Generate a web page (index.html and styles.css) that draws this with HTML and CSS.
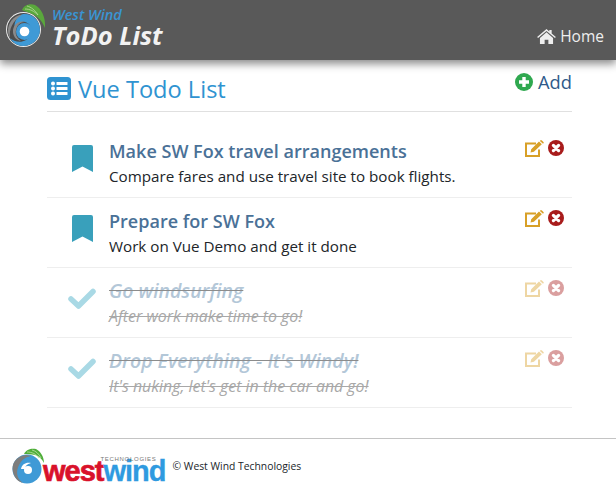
FILE: index.html
```html
<!DOCTYPE html>
<html lang="en">
<head>
<meta charset="utf-8">
<title>Vue Todo List</title>
<link rel="stylesheet" href="styles.css">
</head>
<body>
<svg class="defs" width="0" height="0" aria-hidden="true">
  <symbol id="edit" viewBox="0 0 19 17">
    <path fill="none" stroke="currentColor" stroke-width="2" d="M11 3.500H1V16H14V9.500"/>
    <path fill="currentColor" d="M5.500 12.500l.7-3.300L14 1.500l2.800 2.700-7.900 7.600zM14.900 .9l.9-.8q.7 0 1.700 1t1.400 1.700l-.9 .9z"/>
  </symbol>
  <symbol id="del" viewBox="0 0 16 16">
    <circle cx="8" cy="8" r="8" fill="currentColor"/>
    <path stroke="#fff" stroke-width="3.200" stroke-linecap="round" d="M5.400 5.400l5.200 5.200M10.600 5.400l-5.200 5.200"/>
  </symbol>
  <symbol id="mark" viewBox="0 0 21 27">
    <path fill="currentColor" d="M2 0H19Q21 0 21 2V27L10.500 21.500 0 27V2Q0 0 2 0Z"/>
  </symbol>
  <symbol id="check" viewBox="0 0 28 21">
    <path fill="none" stroke="currentColor" stroke-width="5.500" stroke-linejoin="round" stroke-linecap="round" d="M3 11L10.500 18 25 3.500"/>
  </symbol>
</svg>

<header class="topbar">
  <div class="brand">
    <svg class="brand-logo" viewBox="0 0 48 50" width="48" height="50" aria-hidden="true">
      <circle cx="23.500" cy="29.500" r="17.500" fill="#ececec"/>
      <circle cx="23.500" cy="29.500" r="16.500" fill="#4b4b4b"/>
      <path fill="#3f9ad6" d="M23 14C33 13 40 21 40 30 40 39 32 46 23 46 17 46 12 42 10 38 14 42 21 43 26 40 34 36 33 24 25 22 19 21 15 25 15 29 13 23 17 16 23 14Z"/>
      <path fill="#8a8a8a" d="M22 14.500C13 16 8 23 8 31c0 3 1 5 2 7-1-9 2-16 12-23.500zM13 30c-.5 6 3 10 8 11-4-3-6-6-5-11 1-5 4-8 9-8-6-2-11 2-12 8z"/>
      <circle cx="24.500" cy="31.500" r="8.500" fill="#3f9ad6"/>
      <circle cx="24.500" cy="31.500" r="4.800" fill="#fff"/>
      <path fill="#5aa83c" d="M22 10C24 5 30 3 35 5 41 8 46 17 45 28 42 20 36 15 30 13 27 12 24 11 22 10Z"/>
      <path fill="none" stroke="#b6d99c" stroke-width=".8" d="M27 6c4 1 8 4 11 9M25 9c5 0 9 2 13 6"/>
    </svg>
    <div class="brand-text">
      <div class="brand-sub">West Wind</div>
      <div class="brand-name">ToDo List</div>
    </div>
  </div>
  <a class="home" href="#">
    <svg viewBox="0 0 20 16" width="19" height="15" aria-hidden="true"><path fill="currentColor" d="M10 0l3 2.600V1h2.500v3.700L20 8.600l-1 1.100L10 2 1 9.700 0 8.600zM10 3.500l7 6V16h-5v-4.500H8V16H3V9.500z"/></svg>
    Home
  </a>
</header>

<main class="page">
  <div class="title-row">
    <h1 class="title">
      <svg viewBox="0 0 24 23" width="24" height="23" aria-hidden="true"><rect width="24" height="23" rx="3.500" fill="#2f93d1"/><g fill="#fff"><circle cx="6" cy="6.500" r="2"/><circle cx="6" cy="11.500" r="2"/><circle cx="6" cy="16.500" r="2"/><rect x="9.500" y="5" width="11" height="3" rx=".5"/><rect x="9.500" y="10" width="11" height="3" rx=".5"/><rect x="9.500" y="15" width="11" height="3" rx=".5"/></g></svg>
      <span class="title-text">Vue Todo List</span>
    </h1>
    <a class="add" href="#">
      <svg viewBox="0 0 18 18" width="18" height="18" aria-hidden="true"><circle cx="9" cy="9" r="9" fill="#2fa84f"/><path stroke="#fff" stroke-width="3.400" d="M9 4v10M4 9h10"/></svg>
      Add
    </a>
  </div>

  <ul class="todos">
    <li class="todo">
      <svg class="state state-open"><use href="#mark"/></svg>
      <div class="body">
        <div class="todo-title">Make SW Fox travel arrangements</div>
        <div class="todo-desc">Compare fares and use travel site to book flights.</div>
      </div>
      <div class="actions"><svg class="edit"><use href="#edit"/></svg><svg class="del"><use href="#del"/></svg></div>
    </li>
    <li class="todo">
      <svg class="state state-open"><use href="#mark"/></svg>
      <div class="body">
        <div class="todo-title">Prepare for SW Fox</div>
        <div class="todo-desc">Work on Vue Demo and get it done</div>
      </div>
      <div class="actions"><svg class="edit"><use href="#edit"/></svg><svg class="del"><use href="#del"/></svg></div>
    </li>
    <li class="todo done">
      <svg class="state state-done"><use href="#check"/></svg>
      <div class="body">
        <div class="todo-title">Go windsurfing</div>
        <div class="todo-desc">After work make time to go!</div>
      </div>
      <div class="actions"><svg class="edit"><use href="#edit"/></svg><svg class="del"><use href="#del"/></svg></div>
    </li>
    <li class="todo done">
      <svg class="state state-done"><use href="#check"/></svg>
      <div class="body">
        <div class="todo-title">Drop Everything - It's Windy!</div>
        <div class="todo-desc">It's nuking, let's get in the car and go!</div>
      </div>
      <div class="actions"><svg class="edit"><use href="#edit"/></svg><svg class="del"><use href="#del"/></svg></div>
    </li>
  </ul>
</main>

<footer class="footer">
  <div class="ww-logo">
    <svg viewBox="0 0 34 36" width="34" height="36" aria-hidden="true">
      <circle cx="16" cy="21" r="14.500" fill="#3f9ad6"/>
      <path fill="#7d7d7d" d="M15 7C5 8 0 16 2 24s7 10 10 11C5 30 5 23 8 17s7-8 12-9z"/>
      <path fill="#fff" d="M10 21c1-5 5-7 10-6-4 1-6 3-6 6z"/>
      <circle cx="17" cy="22" r="4" fill="#fff"/>
      <path fill="#4fae3a" d="M13 6C15 1 21 0 25 1c4 2 8 7 8 14-2-4-5-7-9-8-4-1-7-1-11-1Z"/>
      <path fill="none" stroke="#bfe0a8" stroke-width=".8" d="M16 4c5 0 9 2 12 6M21 2c4 1 7 4 9 8"/>
    </svg>
    <div class="ww-word">
      <span class="ww-tech">TECHNOLOGIES</span>
      <span class="ww-west">west</span><span class="ww-wind">wind</span>
    </div>
  </div>
  <span class="copy">© West Wind Technologies</span>
</footer>
</body>
</html>
```
FILE: styles.css
```css
* { box-sizing: border-box; }
html, body { margin: 0; padding: 0; }
body {
  font-family: "Open Sans", "Noto Sans", sans-serif;
  color: #212529;
  background: #fff;
  height: 493px;
  overflow: hidden;
}
a { text-decoration: none; }
.defs { position: absolute; }

.topbar {
  height: 60px;
  background: #595959;
  box-shadow: 0 4px 8px rgba(0, 0, 0, .45);
  display: flex;
  justify-content: space-between;
  padding: 0 12px 0 0;
}
.brand { display: flex; gap: 4px; }
.brand-logo { flex: none; }
.brand-text { display: flex; flex-direction: column; font-style: italic; }
.brand-sub { font-size: 14.5px; line-height: 14px; margin-top: 8px; color: #3a94d2; font-weight: 600; }
.brand-name { font-size: 25.5px; line-height: 27px; font-weight: 700; color: #f2f2f2; }
.home {
  align-self: flex-end;
  margin-bottom: 15px;
  color: #eee;
  font-size: 15.5px;
  line-height: 18px;
  display: flex;
  align-items: center;
  gap: 4px;
}

.page { width: 525px; margin: 0 0 0 47px; }
.title-row {
  height: 52px;
  border-bottom: 1px solid #e0e0e0;
  display: flex;
  justify-content: space-between;
  align-items: flex-start;
  padding-top: 11px;
}
.title {
  margin: 0;
  display: flex;
  align-items: center;
  gap: 7px;
  font-size: 23.6px;
  font-weight: 400;
  line-height: 34px;
  color: #2f93d1;
}
.title-text { position: relative; top: 1px; }
.add {
  display: flex;
  align-items: center;
  gap: 5px;
  color: #2f5a8a;
  font-size: 18.3px;
  line-height: 22px;
}

.todos { list-style: none; margin: 16px 0 0; padding: 0; }
.todo {
  height: 70px;
  border-bottom: 1px solid #eee;
  display: flex;
  padding-top: 11px;
}
.state { flex: none; }
.state-open { width: 21px; height: 27px; margin: 6px 16px 0 25px; color: #39a0bb; }
.state-done { width: 28px; height: 21px; margin: 9px 13px 0 21px; color: #a9d9e5; }
.body { flex: 1; min-width: 0; }
.todo-title { font-size: 18.05px; line-height: 25px; font-weight: 600; color: #4a7197; }
.todo-desc { font-size: 15.2px; line-height: 21px; margin-top: 2px; color: #212529; }
.actions { display: flex; align-items: center; gap: 4px; height: 18px; margin: 0 8px 0 0; }
.edit { width: 19px; height: 17px; color: #d8a027; }
.del { width: 16px; height: 16px; color: #a81c1c; }
.done .body { margin-top: -1px; }
.done .todo-title, .done .todo-desc { font-style: italic; text-decoration: line-through; }
.done .todo-title { font-size: 19.45px; color: #b3c7d8; text-decoration-color: #8c8c8c; }
.done .todo-desc { font-size: 15.9px; margin-top: 3px; color: #a8a8a8; }
.done .actions { opacity: .42; }

.footer {
  position: absolute;
  top: 438px;
  left: 0;
  right: 0;
  height: 55px;
  border-top: 1px solid #c4c4c4;
  display: flex;
  align-items: center;
  padding: 0 0 0 11px;
  gap: 7px;
}
.ww-logo { display: flex; align-items: flex-end; }
.ww-word { position: relative; top: 2px; line-height: 30px; margin-left: -2px; font-family: "Liberation Sans", sans-serif; font-weight: 700; font-size: 29px; letter-spacing: -1px; }
.ww-tech { position: absolute; right: 9px; top: -1px; font-size: 6px; line-height: 8px; letter-spacing: .7px; color: #777; font-weight: 400; }
.ww-west { color: #d9112a; -webkit-text-stroke: .7px #d9112a; }
.ww-wind { color: #2f9ae0; -webkit-text-stroke: .3px #2f9ae0; }
.copy { font-size: 10.35px; color: #212529; }
```
